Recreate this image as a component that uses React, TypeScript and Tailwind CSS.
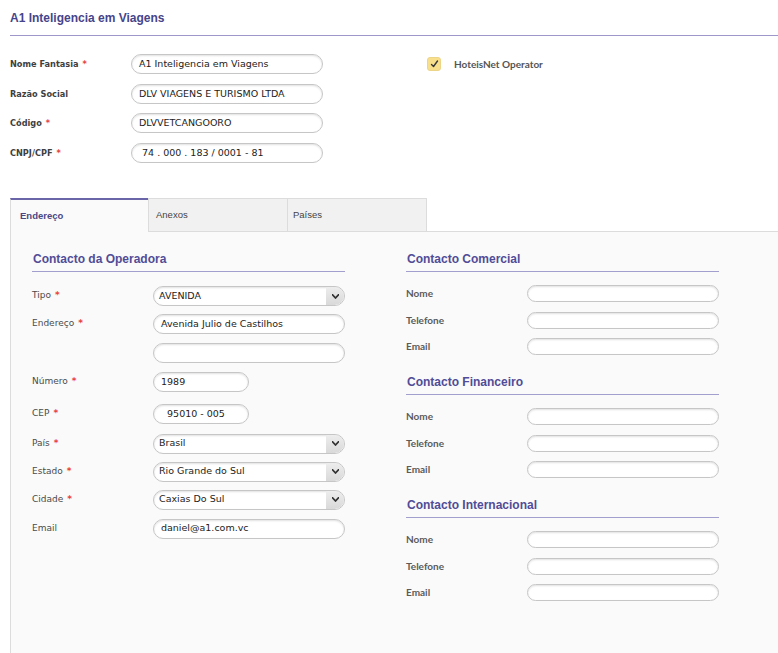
import React from "react";

const labelFont = { fontFamily: '"DejaVu Sans", Verdana, sans-serif' };

function Req() {
  return <span className="text-[#e8413c] font-bold ml-[4px]">*</span>;
}

function TextInput({ value = "", w = "w-[192px]", h = "h-[20px]" }: { value?: string; w?: string; h?: string }) {
  return (
    <div
      className={`${w} ${h} rounded-full border border-[#c6c6c6] bg-white shadow-[inset_0_1px_2px_rgba(0,0,0,0.12)] flex items-center px-[7px] text-[9.5px] text-[#222] overflow-hidden whitespace-pre`}
      style={labelFont}
    >
      {value}
    </div>
  );
}

function SelectInput({ value }: { value: string }) {
  return (
    <div
      className="w-[192px] h-[20px] rounded-full border border-[#c6c6c6] bg-white shadow-[inset_0_1px_2px_rgba(0,0,0,0.12)] flex items-center overflow-hidden text-[9.5px] text-[#222]"
      style={labelFont}
    >
      <span className="flex-1 pl-[5px] whitespace-nowrap">{value}</span>
      <div className="w-[18px] h-full bg-gradient-to-b from-[#ededed] to-[#d9d9d9] rounded-r-full flex items-center justify-center">
        <svg width="7" height="5" viewBox="0 0 7 5">
          <path d="M0.5 0.8 L3.5 4 L6.5 0.8" fill="none" stroke="#333" strokeWidth="1.8" strokeLinejoin="round" strokeLinecap="round" />
        </svg>
      </div>
    </div>
  );
}

function Heading({ children }: { children: React.ReactNode }) {
  return (
    <div
      className="pb-[4px] border-b-[1.5px] border-[#a29ecd] text-[12px] leading-[16px] font-bold text-[#514c97] pl-[1px]"
      style={{ fontFamily: '"Liberation Sans", Arial, sans-serif' }}
    >
      {children}
    </div>
  );
}

function LeftRow({ label, req, children, mt }: { label?: string; req?: boolean; children: React.ReactNode; mt: string }) {
  return (
    <div className={`flex items-center ${mt}`}>
      <div className="w-[121px] text-[9px] text-[#4a4a4a]" style={labelFont}>
        {label}
        {req && <Req />}
      </div>
      {children}
    </div>
  );
}

function RightSection({ title, mt }: { title: string; mt: string }) {
  return (
    <div className={mt}>
      <Heading>{title}</Heading>
      <div className="flex flex-col gap-[9.5px] mt-[13px]">
        {["Nome", "Telefone", "Email"].map((l) => (
          <div key={l} className="flex items-center">
            <div className="w-[121px] text-[10px] font-bold text-[#5a5a5a]" style={{ fontFamily: "Lato, sans-serif" }}>
              {l}
            </div>
            <TextInput h="h-[17px]" />
          </div>
        ))}
      </div>
    </div>
  );
}

export default function App() {
  return (
    <div className="w-[778px] h-[653px] bg-white flex flex-col overflow-hidden">
      <div className="ml-[10px] h-[36px] border-b-[1.5px] border-[#9d98c9]">
        <div
          className="pt-[10px] text-[12px] leading-[16px] font-bold text-[#46448a]"
          style={{ fontFamily: '"Liberation Sans", Arial, sans-serif' }}
        >
          A1 Inteligencia em Viagens
        </div>
      </div>

      <div className="flex ml-[10px] mt-[18px]">
        <div className="w-[417px] flex flex-col">
          {[
            { l: "Nome Fantasia", r: true, v: "A1 Inteligencia em Viagens", mt: "" },
            { l: "Razão Social", r: false, v: "DLV VIAGENS E TURISMO LTDA", mt: "mt-[10px]" },
            { l: "Código", r: true, v: "DLVVETCANGOORO", mt: "mt-[9px]" },
            { l: "CNPJ/CPF", r: true, v: " 74 . 000 . 183 / 0001 - 81", mt: "mt-[10px]" },
          ].map((row) => (
            <div key={row.l} className={`flex items-center ${row.mt}`}>
              <div className="w-[121px] text-[8.2px] text-[#3f3f3f] font-bold" style={labelFont}>
                {row.l}
                {row.r && <Req />}
              </div>
              <TextInput value={row.v} />
            </div>
          ))}
        </div>
        <div className="flex items-start pt-[3px]">
          <div className="w-[14px] h-[14px] rounded-[3px] bg-[#f8df8c] border border-[#ecd488] flex items-center justify-center">
            <svg width="9" height="8" viewBox="0 0 9 8">
              <path d="M1.5 4.5 L3.5 6.5 L7.5 1" fill="none" stroke="#3a3a3a" strokeWidth="1.4" strokeLinecap="round" strokeLinejoin="round" />
            </svg>
          </div>
          <div className="ml-[13px] text-[10px] leading-[14px] font-bold text-[#555]" style={{ fontFamily: "Lato, sans-serif" }}>
            HoteisNet Operator
          </div>
        </div>
      </div>

      <div className="flex ml-[10px] mt-[35px] h-[34px]" style={{ fontFamily: '"Liberation Sans", Arial, sans-serif' }}>
        <div className="w-[138px] border-l border-[#dcdcdc] border-t-2 border-t-[#6a65a8] bg-[#fafafa] flex items-center pl-[9px] text-[9.5px] font-bold text-[#4a4785]">
          Endereço
        </div>
        <div className="w-[139px] border-l border-t border-b border-[#dcdcdc] bg-[#f1f1f1] flex items-center pl-[7px] text-[9.5px] text-[#444]">
          Anexos
        </div>
        <div className="w-[140px] border-l border-r border-t border-b border-[#dcdcdc] bg-[#f1f1f1] flex items-center pl-[5px] text-[9.5px] text-[#444]">
          Países
        </div>
        <div className="flex-1 border-b border-[#dcdcdc]" />
      </div>

      <div className="flex-1 ml-[10px] border-l border-[#dcdcdc] bg-[#fafafa] flex pl-[21px] pt-[19px] gap-[61px]">
        <div className="w-[313px]">
          <Heading>Contacto da Operadora</Heading>
          <LeftRow label="Tipo" req mt="mt-[14px]">
            <SelectInput value="AVENIDA" />
          </LeftRow>
          <LeftRow label="Endereço" req mt="mt-[8px]">
            <TextInput value="Avenida Julio de Castilhos" />
          </LeftRow>
          <LeftRow mt="mt-[9px]">
            <TextInput />
          </LeftRow>
          <LeftRow label="Número" req mt="mt-[9px]">
            <TextInput value="1989" w="w-[96px]" />
          </LeftRow>
          <LeftRow label="CEP" req mt="mt-[12px]">
            <TextInput value="  95010 - 005" w="w-[96px]" />
          </LeftRow>
          <LeftRow label="País" req mt="mt-[9.5px]">
            <SelectInput value="Brasil" />
          </LeftRow>
          <LeftRow label="Estado" req mt="mt-[8px]">
            <SelectInput value="Rio Grande do Sul" />
          </LeftRow>
          <LeftRow label="Cidade" req mt="mt-[8px]">
            <SelectInput value="Caxias Do Sul" />
          </LeftRow>
          <LeftRow label="Email" mt="mt-[9px]">
            <TextInput value="daniel@a1.com.vc" />
          </LeftRow>
        </div>
        <div className="w-[313px]">
          <RightSection title="Contacto Comercial" mt="" />
          <RightSection title="Contacto Financeiro" mt="mt-[19px]" />
          <RightSection title="Contacto Internacional" mt="mt-[19px]" />
        </div>
      </div>
    </div>
  );
}
